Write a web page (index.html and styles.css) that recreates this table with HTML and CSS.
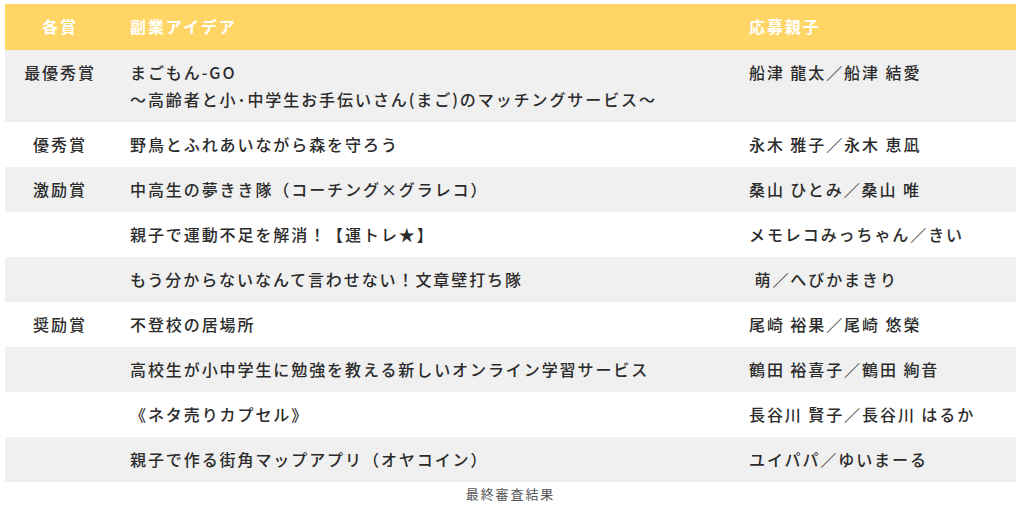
FILE: index.html
```html
<!DOCTYPE html>
<html lang="ja">
<head>
<meta charset="utf-8">
<title>最終審査結果</title>
<link rel="stylesheet" href="styles.css">
</head>
<body>
<table class="results">
  <caption class="results-caption">最終審査結果</caption>
  <colgroup>
    <col class="col-award">
    <col class="col-idea">
    <col class="col-name">
  </colgroup>
  <thead>
    <tr>
      <th class="award">各賞</th>
      <th>副業アイデア</th>
      <th>応募親子</th>
    </tr>
  </thead>
  <tbody>
    <tr>
      <td class="award">最優秀賞</td>
      <td>まごもん-GO<br>～高齢者と小･中学生お手伝いさん(まご)のマッチングサービス～</td>
      <td>船津 龍太／船津 結愛</td>
    </tr>
    <tr>
      <td class="award">優秀賞</td>
      <td>野鳥とふれあいながら森を守ろう</td>
      <td>永木 雅子／永木 恵凪</td>
    </tr>
    <tr>
      <td class="award">激励賞</td>
      <td>中高生の夢きき隊（コーチング×グラレコ）</td>
      <td>桑山 ひとみ／桑山 唯</td>
    </tr>
    <tr>
      <td class="award"></td>
      <td>親子で運動不足を解消！【運トレ★】</td>
      <td>メモレコみっちゃん／きい</td>
    </tr>
    <tr>
      <td class="award"></td>
      <td>もう分からないなんて言わせない！文章壁打ち隊</td>
      <td>&nbsp;萌／へびかまきり</td>
    </tr>
    <tr>
      <td class="award">奨励賞</td>
      <td>不登校の居場所</td>
      <td>尾崎 裕果／尾崎 悠榮</td>
    </tr>
    <tr>
      <td class="award"></td>
      <td>高校生が小中学生に勉強を教える新しいオンライン学習サービス</td>
      <td>鶴田 裕喜子／鶴田 絢音</td>
    </tr>
    <tr>
      <td class="award"></td>
      <td>《ネタ売りカプセル》</td>
      <td>長谷川 賢子／長谷川 はるか</td>
    </tr>
    <tr>
      <td class="award"></td>
      <td>親子で作る街角マップアプリ（オヤコイン）</td>
      <td>ユイパパ／ゆいまーる</td>
    </tr>
  </tbody>
</table>
</body>
</html>
```

FILE: styles.css
```css
html, body {
  margin: 0;
  padding: 0;
  background: #ffffff;
}

body {
  padding: 4px 6px 0 5px;
  font-family: "Noto Sans CJK JP", "Noto Sans", sans-serif;
  color: #2b2b2b;
  font-size: 16px;
  font-weight: 500;
  letter-spacing: 0.12em;
}

.results {
  width: 100%;
  border-collapse: collapse;
  table-layout: fixed;
}

.col-award { width: 110px; }
.col-name { width: 282px; }

.results th,
.results td {
  text-align: left;
  vertical-align: top;
  padding: 9px 15px;
  line-height: 27px;
  white-space: nowrap;
}

.results th {
  background: #ffd565;
  color: #ffffff;
  font-weight: bold;
  padding-top: 9px;
  padding-bottom: 10px;
}

.results .award {
  text-align: center;
  padding-left: 5px;
  padding-right: 5px;
}

.results tbody tr:nth-child(odd) td {
  background: #f0f0f0;
}

.results-caption {
  caption-side: bottom;
  font-size: 13px;
  font-weight: normal;
  line-height: 18px;
  color: #555555;
  padding-top: 3px;
  text-align: center;
}
```
